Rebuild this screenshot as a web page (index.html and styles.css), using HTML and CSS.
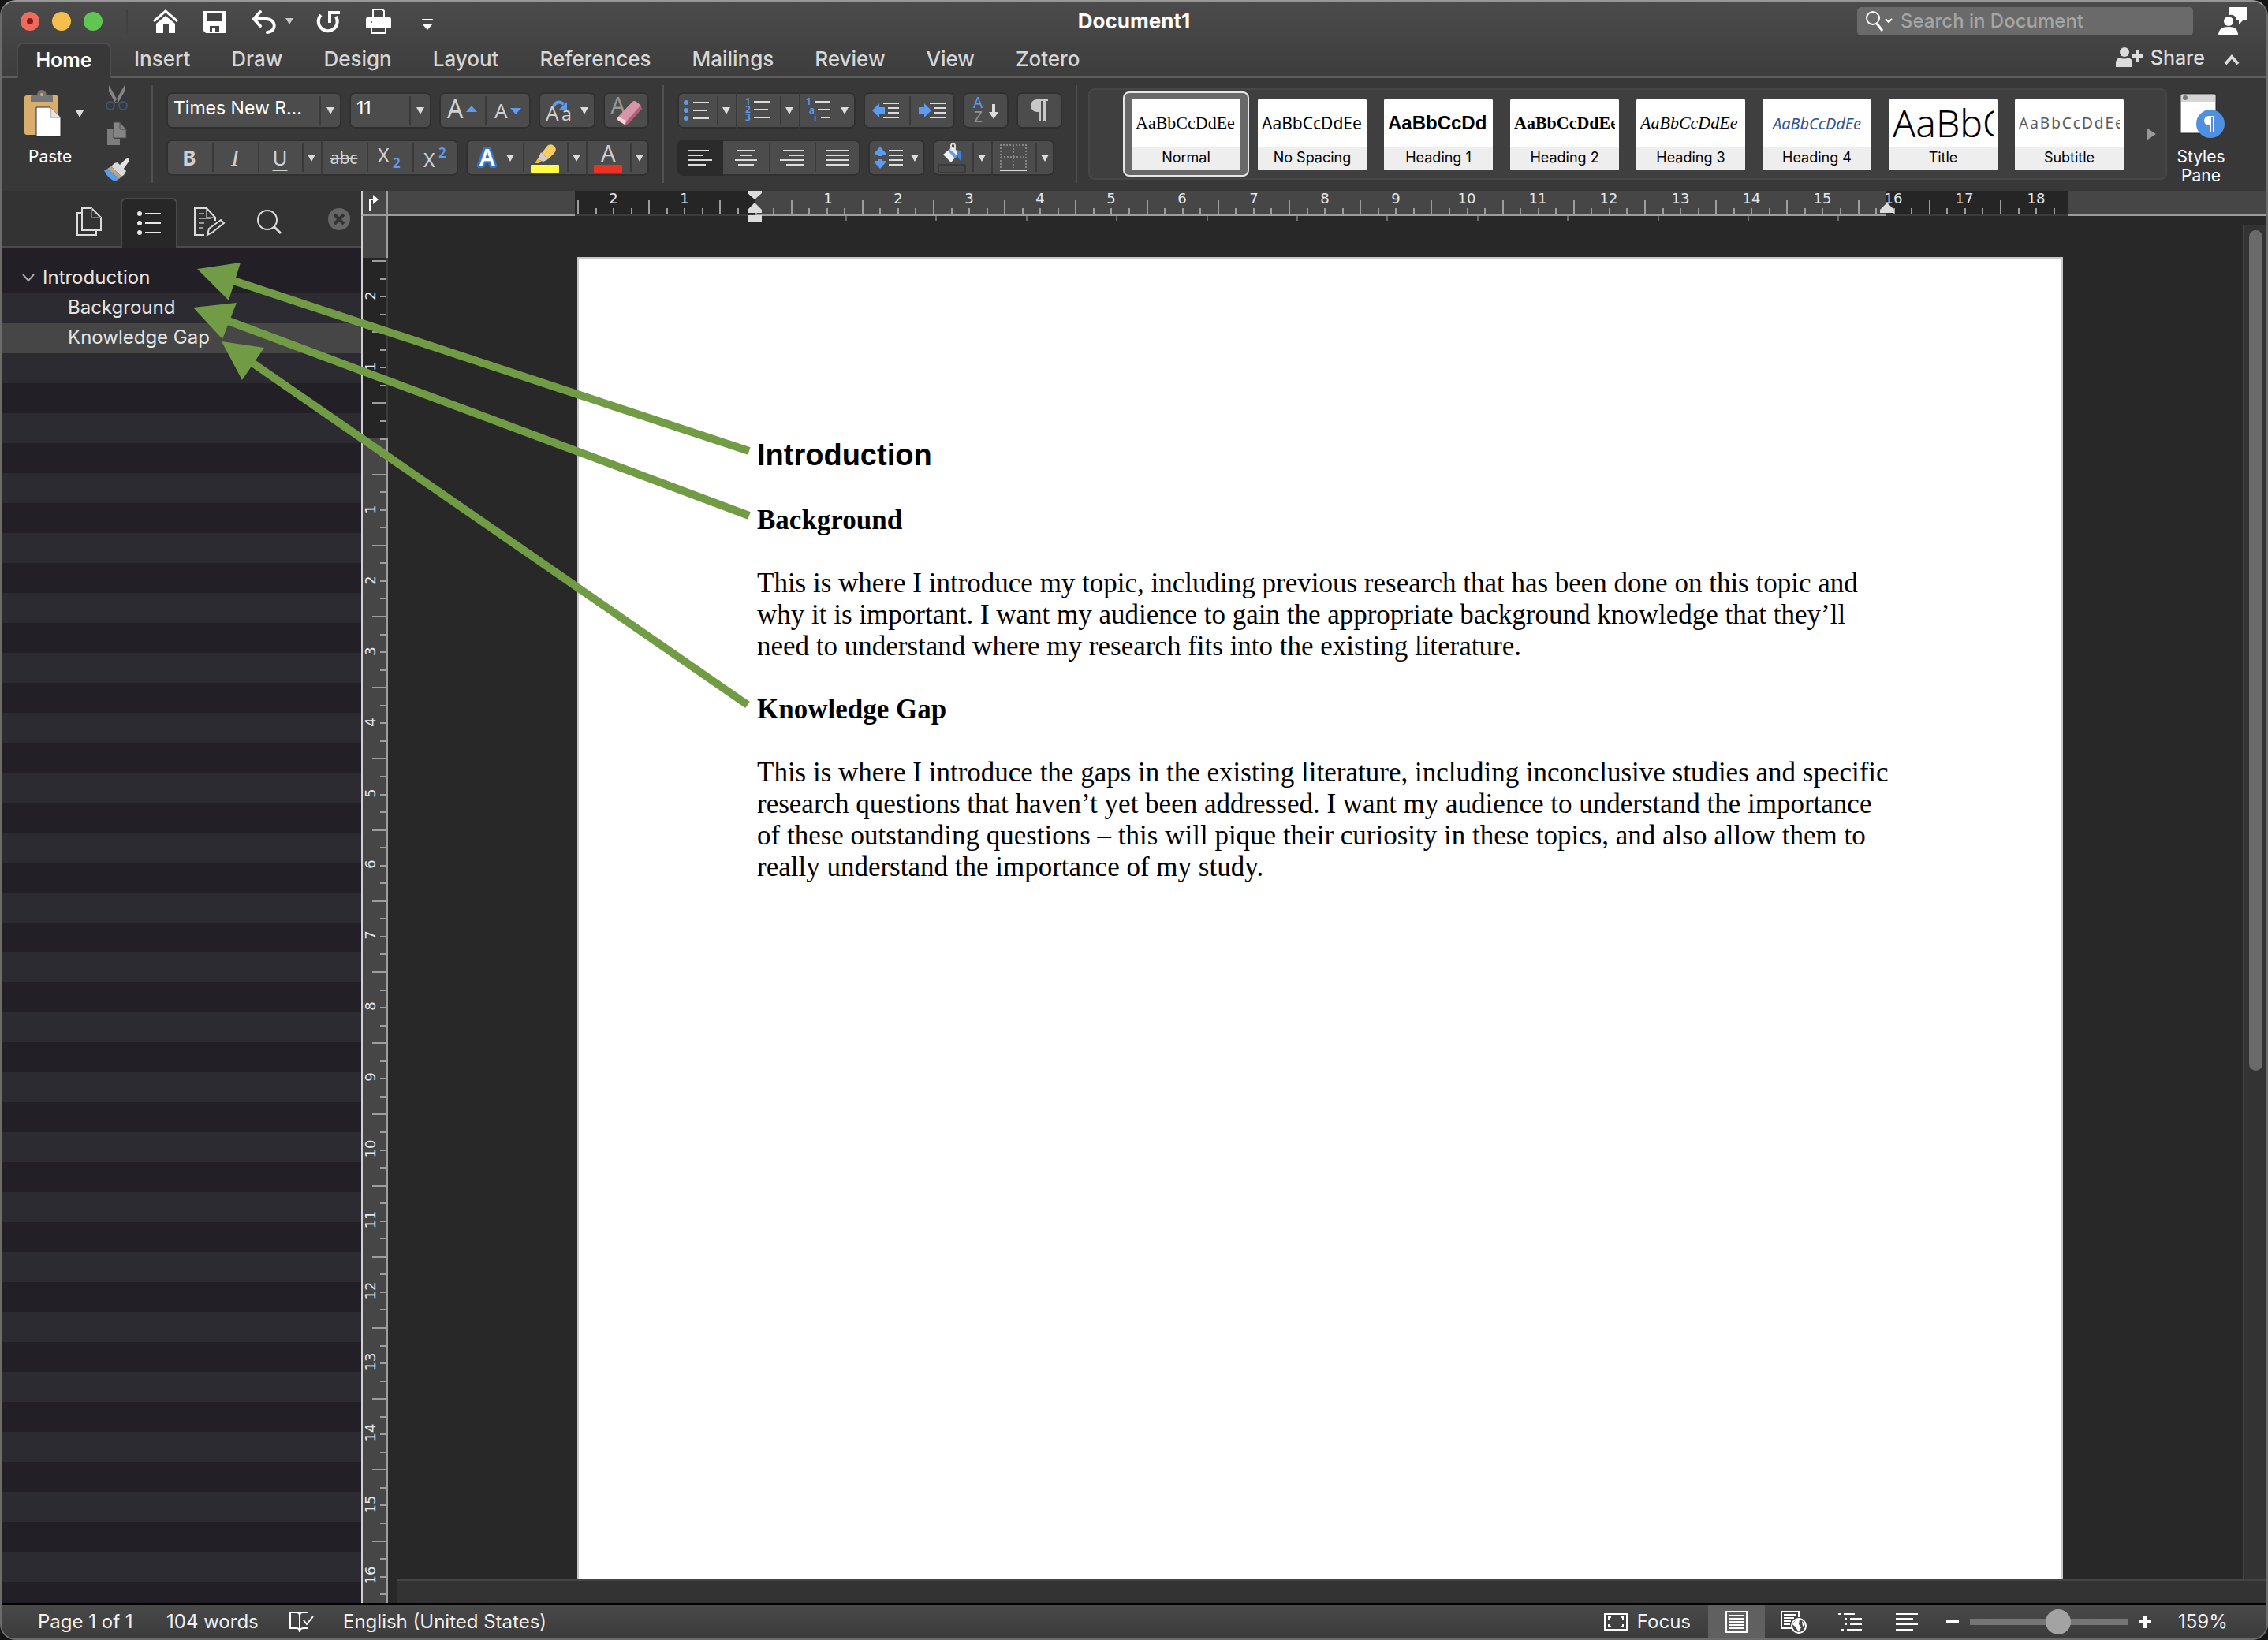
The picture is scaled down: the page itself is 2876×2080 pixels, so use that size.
FILE: index.html
```html
<!DOCTYPE html>
<html lang="en">
<head>
<meta charset="utf-8">
<title>Document1</title>
<link rel="stylesheet" href="styles.css">
</head>
<body>
<div class="window">
  <header class="chrome">
    <div class="titlebar">
      <div class="quick">
        <div class="lights">
          <button class="light red" aria-label="Close"><svg width="24" height="24"><circle cx="12" cy="12" r="4" fill="#8c1a12"/></svg></button>
          <button class="light yellow" aria-label="Minimize"></button>
          <button class="light green" aria-label="Zoom"></button>
        </div>
        <div class="quick-tools">
          <button aria-label="Home"><svg width="32" height="32" viewBox="0 0 32 32"><path d="M1 16 16 3 31 16" fill="none" stroke="#fff" stroke-width="3"/><path d="M4 19 16 9 28 19V31H20V20H13V31H4Z" fill="#fff"/></svg></button>
          <button aria-label="Save"><svg width="32" height="32" viewBox="0 0 32 32"><path d="M2 3H30V31H5L2 28Z" fill="#fff"/><path d="M6 5H26V16H6ZM10 22H22V29H17V25H13V29H10Z" fill="#454545"/></svg></button>
          <button class="undo" aria-label="Undo"><svg width="32" height="32" viewBox="0 0 32 32"><path d="M12 4 4 13 12 22M4 13H19C33 13 33 29 21 30" fill="none" stroke="#fff" stroke-width="4" stroke-linecap="round"/></svg><svg width="10" height="10" viewBox="0 0 10 10"><path d="M0 1H10L5 9Z" fill="#c8c8c8"/></svg></button>
          <button aria-label="Repeat"><svg width="32" height="32" viewBox="0 0 32 32"><path d="M5 8A12 12 0 1 0 24 10M16 18V5H29" fill="none" stroke="#fff" stroke-width="4"/></svg></button>
          <button aria-label="Print"><svg width="32" height="34" viewBox="0 0 32 34"><path d="M9 12V2H21L23 4V12" fill="none" stroke="#fff" stroke-width="2"/><path d="M4 11H28Q32 11 32 15V26H0V15Q0 11 4 11Z" fill="#fff"/><circle cx="7" cy="18" r="1" fill="#454545"/><rect x="7" y="25" width="18" height="7" fill="#454545" stroke="#fff" stroke-width="2"/></svg></button>
          <button aria-label="Customize toolbar"><svg width="32" height="32" viewBox="0 0 32 32"><path d="M9 13H23V15H9ZM9 19H23L16 27Z" fill="#fff"/></svg></button>
        </div>
      </div>
      <h1 class="title">Document1</h1>
      <div class="search-area">
        <label class="search"><svg width="38" height="32" viewBox="0 0 38 32"><circle cx="11" cy="12" r="8" fill="none" stroke="#fff" stroke-width="2"/><path d="M16 19 23 28" stroke="#fff" stroke-width="3"/><path d="M27 13 31 17 35 13" fill="none" stroke="#fff" stroke-width="2"/></svg><input type="text" placeholder="Search in Document" aria-label="Search in Document"></label>
        <button aria-label="Feedback"><svg width="36" height="36" viewBox="0 0 36 36"><path d="M14 0H36V16H32L26 22V16H23A7 7 0 0 0 14 10Z" fill="#fff"/><circle cx="13" cy="18" r="6" fill="#fff"/><path d="M0 36C0 28 5 25 13 25S25 28 25 36Z" fill="#fff"/></svg></button>
      </div>
    </div>
    <nav class="tabs">
      <button class="tab active">Home</button>
      <button class="tab">Insert</button>
      <button class="tab">Draw</button>
      <button class="tab">Design</button>
      <button class="tab">Layout</button>
      <button class="tab">References</button>
      <button class="tab">Mailings</button>
      <button class="tab">Review</button>
      <button class="tab">View</button>
      <button class="tab">Zotero</button>
      <button class="share"><svg width="36" height="26" viewBox="0 0 36 26"><ellipse cx="11" cy="6" rx="6" ry="6" fill="#dcdcdc"/><path d="M0 25V19Q1 14 5 13Q11 16 16 13Q21 15 21 19V25Z" fill="#dcdcdc"/><path d="M20 11H35M27 3V19" stroke="#dcdcdc" stroke-width="4"/></svg>Share</button>
      <button class="collapse" aria-label="Collapse ribbon"><svg width="20" height="14" viewBox="0 0 20 14"><path d="M2 12 10 3 18 12" fill="none" stroke="#dcdcdc" stroke-width="4"/></svg></button>
    </nav>
  </header>

  <section class="ribbon">
    <div class="clip">
      <button class="paste">
        <span class="paste-icons"><svg width="48" height="60" viewBox="0 0 48 60"><rect x="1" y="7" width="43" height="50" rx="3" fill="#d9ae6c"/><path d="M9 15V9Q9 6 13 6H17Q18 0 23 0T29 6H33Q37 6 37 9V15Z" fill="#757575"/><circle cx="23" cy="6" r="2" fill="#d9ae6c"/><path d="M16 22H34L47 35V59H16Z" fill="#fff" stroke="#2b2b2b"/><path d="M34 22V35H47Z" fill="#e4e4e4" stroke="#888"/></svg><svg width="10" height="10" viewBox="0 0 10 10"><path d="M0 1H10L5 10Z" fill="#dcdcdc"/></svg></span>
        <span>Paste</span>
      </button>
      <div class="clip-small">
        <button aria-label="Cut"><svg width="32" height="32" viewBox="0 0 32 32"><path d="M6 0 18 21 14 22 6 8ZM26 0 14 21 18 22 26 8Z" fill="#858585"/><circle cx="8" cy="26" r="5" fill="none" stroke="#3d5573" stroke-width="2"/><circle cx="24" cy="26" r="5" fill="none" stroke="#3d5573" stroke-width="2"/></svg></button>
        <button aria-label="Copy"><svg width="32" height="32" viewBox="0 0 32 32"><path d="M4 10H12V22H20V30H4Z" fill="#7d7d7d"/><path d="M12 1H20L28 10V21H12Z" fill="#858585" stroke="#4a4a4a"/><path d="M20 1V10H28" fill="none" stroke="#4a4a4a"/></svg></button>
        <button aria-label="Format painter"><svg width="32" height="32" viewBox="0 0 32 32"><path d="M19 10 27 2Q32 -1 32 4L24 15Z" fill="#e4e4e4"/><path d="M13 7 17 6 28 17 25 22 22 24 9 11Z" fill="#dadada"/><path d="M9 11 22 24 19 27 4 14Z" fill="#b9a48e"/><path d="M4 14 19 27 14 30Q4 26 0 16Z" fill="#5a9be8"/></svg></button>
      </div>
    </div>
    <div class="sep"></div>

    <div class="tools">
      <div class="row">
        <div class="group combo wide"><select aria-label="Font"><option>Times New R...</option></select><span class="drop"><svg width="10" height="10" viewBox="0 0 10 10"><path d="M0 1H10L5 10Z" fill="#dcdcdc"/></svg></span></div>
        <div class="group combo narrow"><select aria-label="Font size"><option>11</option></select><span class="drop"><svg width="10" height="10" viewBox="0 0 10 10"><path d="M0 1H10L5 10Z" fill="#dcdcdc"/></svg></span></div>
        <div class="group">
          <button class="b58" aria-label="Increase font size"><svg width="38" height="36" viewBox="0 0 38 36"><text x="0" y="28" font-size="32" fill="#d0d0d0">A</text><path d="M24 20 31 12 38 20Z" fill="#5b9cf2"/></svg></button>
          <button class="b58 div" aria-label="Decrease font size"><svg width="42" height="36" viewBox="0 0 42 36"><text x="4" y="28" font-size="26" fill="#d0d0d0">A</text><path d="M24 15H38L31 23Z" fill="#5b9cf2"/></svg></button>
        </div>
        <div class="group"><button class="b72" aria-label="Change case"><svg width="34" height="38" viewBox="0 0 34 38"><text x="0" y="32" font-size="26" fill="#d0d0d0">A</text><text x="20" y="32" font-size="23" fill="#d0d0d0">a</text><path d="M10 14Q14 5 23 11" fill="none" stroke="#5b9cf2" stroke-width="4"/><path d="M27 8V18H17Z" fill="#5b9cf2"/></svg><svg width="10" height="10" viewBox="0 0 10 10"><path d="M0 1H10L5 10Z" fill="#dcdcdc"/></svg></button></div>
        <div class="group"><button class="b58" aria-label="Clear formatting"><svg width="40" height="40" viewBox="0 0 40 40"><text x="0" y="25" font-size="30" fill="#989890">A</text><path d="M9 29 28 9Q30 7 33 9L38 13Q40 15 38 19L23 36Q20 39 16 36L10 33Q8 31 9 29Z" fill="#d795a9"/><path d="M10 28 20 33 18 38 10 33Q8 31 10 28Z" fill="#f4d3dc"/><path d="M38 14 40 18 23 37 19 38 21 33Z" fill="#b0607a"/></svg></button></div>
      </div>
      <div class="row">
        <div class="group">
          <button class="b58 glyph bold">B</button>
          <button class="b58 div glyph ital">I</button>
          <button class="b56 div glyph under">U</button>
          <button class="b24 div" aria-label="Underline style"><svg width="10" height="10" viewBox="0 0 10 10"><path d="M0 1H10L5 10Z" fill="#dcdcdc"/></svg></button>
          <button class="b58 full glyph strike">abc</button>
          <button class="b58 div" aria-label="Subscript"><svg width="30" height="36" viewBox="0 0 30 36"><text x="0" y="24" font-size="25" fill="#d0d0d0">X</text><text x="19" y="31" font-size="17" font-weight="600" fill="#5b9cf2">2</text></svg></button>
          <button class="b58 div" aria-label="Superscript"><svg width="30" height="36" viewBox="0 0 30 36"><text x="0" y="30" font-size="25" fill="#d0d0d0">X</text><text x="19" y="18" font-size="17" font-weight="600" fill="#5b9cf2">2</text></svg></button>
        </div>
        <div class="group">
          <button class="b72" aria-label="Text effects"><svg width="30" height="36" viewBox="0 0 30 36"><text x="6" y="28" font-size="29" font-weight="600" fill="#fff" stroke="#2f77c8" stroke-width="6" paint-order="stroke" stroke-linejoin="round">A</text></svg><svg width="10" height="10" viewBox="0 0 10 10"><path d="M0 1H10L5 10Z" fill="#dcdcdc"/></svg></button>
          <button class="b56 div" aria-label="Highlight"><svg width="36" height="38" viewBox="0 0 36 38"><path d="M21 4Q24 1 28 3L31 6Q33 9 30 13L22 21 14 13Z" fill="#f5cd63"/><path d="M13 12 22 21 16 24 9 21Z" fill="#d0d0d0"/><path d="M9 20 14 24 10 26H5Z" fill="#f0b83c"/><rect y="28" width="36" height="10" rx="1" fill="#fdfb45"/></svg></button>
          <button class="b24 div" aria-label="Highlight colour"><svg width="10" height="10" viewBox="0 0 10 10"><path d="M0 1H10L5 10Z" fill="#dcdcdc"/></svg></button>
          <button class="b56 full" aria-label="Font colour"><svg width="36" height="38" viewBox="0 0 36 38"><text x="9" y="24" font-size="29" fill="#d0d0d0">A</text><rect y="28" width="36" height="10" rx="1" fill="#ec3223"/></svg></button>
          <button class="b24 div" aria-label="Font colour list"><svg width="10" height="10" viewBox="0 0 10 10"><path d="M0 1H10L5 10Z" fill="#dcdcdc"/></svg></button>
        </div>
      </div>
    </div>
    <div class="sep"></div>

    <div class="tools">
      <div class="row">
        <div class="group">
          <button class="b50" aria-label="Bullets"><svg width="34" height="28" viewBox="0 0 34 28"><g fill="#5b9cf2"><circle cx="3" cy="4" r="3"/><circle cx="3" cy="14" r="3"/><circle cx="3" cy="24" r="3"/></g><path d="M12 4H32M12 14H30M12 24H32" stroke="#dcdcdc" stroke-width="2"/></svg></button>
          <button class="b24 div" aria-label="Bullet styles"><svg width="10" height="10" viewBox="0 0 10 10"><path d="M0 1H10L5 10Z" fill="#dcdcdc"/></svg></button>
          <button class="b56 full" aria-label="Numbering"><svg width="34" height="34" viewBox="0 0 34 34"><g fill="#5b9cf2" font-size="12" font-weight="600"><text x="1" y="10">1</text><text x="1" y="20">2</text><text x="1" y="30">3</text></g><path d="M12 6H32M12 16H30M12 26H32" stroke="#dcdcdc" stroke-width="2"/></svg></button>
          <button class="b24 div" aria-label="Number styles"><svg width="10" height="10" viewBox="0 0 10 10"><path d="M0 1H10L5 10Z" fill="#dcdcdc"/></svg></button>
          <button class="b72 full" aria-label="Multilevel list"><svg width="34" height="34" viewBox="0 0 34 34"><g fill="#5b9cf2" font-size="12" font-weight="600"><text x="0" y="10">1</text><text x="4" y="21">a</text><text x="10" y="31">i</text></g><path d="M11 6H31M15 16H31M19 26H31" stroke="#dcdcdc" stroke-width="2"/></svg><svg width="10" height="10" viewBox="0 0 10 10"><path d="M0 1H10L5 10Z" fill="#dcdcdc"/></svg></button>
        </div>
        <div class="group">
          <button class="b58" aria-label="Decrease indent"><svg width="36" height="26" viewBox="0 0 36 26"><path d="M0 13 9 4V9H16V17H9V22Z" fill="#5b9cf2"/><path d="M14 4H34M20 10H34M20 16H34M14 22H34" stroke="#dcdcdc" stroke-width="2"/></svg></button>
          <button class="b58 div" aria-label="Increase indent"><svg width="36" height="26" viewBox="0 0 36 26"><path d="M17 13 8 4V9H1V17H8V22Z" fill="#5b9cf2"/><path d="M15 4H35M21 10H35M21 16H35M15 22H35" stroke="#dcdcdc" stroke-width="2"/></svg></button>
        </div>
        <div class="group"><button class="b58" aria-label="Sort"><svg width="32" height="36" viewBox="0 0 32 36"><text x="0" y="15" font-size="19" fill="#5b9cf2">A</text><text x="1" y="33" font-size="19" fill="#909090">Z</text><path d="M26 10V22" stroke="#dcdcdc" stroke-width="4"/><path d="M20 20H32L26 29Z" fill="#dcdcdc"/></svg></button></div>
        <div class="group"><button class="b58" aria-label="Show formatting"><svg width="26" height="32" viewBox="0 0 26 32"><path d="M24 2H10A8 8 0 0 0 10 18H12V30H15V4H18V30H21V4H24Z" fill="#c8c8c8"/></svg></button></div>
      </div>
      <div class="row">
        <div class="group">
          <button class="b58 pressed" aria-label="Align left"><svg width="32" height="24" viewBox="0 0 32 24"><path d="M1 3H27M1 9H19M1 15H31M1 21H23" stroke="#dcdcdc" stroke-width="2"/></svg></button>
          <button class="b58" aria-label="Align centre"><svg width="30" height="24" viewBox="0 0 30 24"><path d="M3 3H27M7 9H23M1 15H29M5 21H25" stroke="#dcdcdc" stroke-width="2"/></svg></button>
          <button class="b58 div" aria-label="Align right"><svg width="30" height="24" viewBox="0 0 30 24"><path d="M4 3H30M12 9H30M0 15H30M8 21H30" stroke="#dcdcdc" stroke-width="2"/></svg></button>
          <button class="b58 div" aria-label="Justify"><svg width="30" height="24" viewBox="0 0 30 24"><path d="M1 3H29M1 9H29M1 15H29M1 21H29" stroke="#dcdcdc" stroke-width="2"/></svg></button>
        </div>
        <div class="group"><button class="b72" aria-label="Line spacing"><svg width="36" height="30" viewBox="0 0 36 30"><path d="M7 1 14 9V11H10V13H4V11H0V9ZM7 29 14 21V19H10V17H4V19H0V21Z" fill="#5b9cf2"/><path d="M18 6H36M18 12H36M18 18H36M18 24H36" stroke="#dcdcdc" stroke-width="2"/></svg><svg width="10" height="10" viewBox="0 0 10 10"><path d="M0 1H10L5 10Z" fill="#dcdcdc"/></svg></button></div>
        <div class="group">
          <button class="b50" aria-label="Shading"><svg width="36" height="40" viewBox="0 0 36 40"><path d="M6 16 18 6 26 14 16 26Z" fill="#f2f2f2"/><path d="M12 11 15 9 24 18 21 21Z" fill="#5b9cf2"/><path d="M16 12V4Q19 -1 21 4V12" fill="none" stroke="#ddd" stroke-width="2"/><path d="M23 10Q32 11 28 24L25 20Z" fill="#3f82dc"/><rect x="0" y="29" width="34" height="10" rx="1" fill="#494949" stroke="#3a3a3a" stroke-width="2"/></svg></button>
          <button class="b24 div" aria-label="Shading colours"><svg width="10" height="10" viewBox="0 0 10 10"><path d="M0 1H10L5 10Z" fill="#dcdcdc"/></svg></button>
          <button class="b56 full" aria-label="Borders"><svg width="34" height="36" viewBox="0 0 34 36"><path d="M1 31V2H33V31M1 17H33M17 2V31" fill="none" stroke="#858585" stroke-width="2" stroke-dasharray="2 2"/><path d="M0 34H34" stroke="#dcdcdc" stroke-width="2"/></svg></button>
          <button class="b24 div" aria-label="Border styles"><svg width="10" height="10" viewBox="0 0 10 10"><path d="M0 1H10L5 10Z" fill="#dcdcdc"/></svg></button>
        </div>
      </div>
    </div>
    <div class="sep last"></div>

    <div class="gallery">
      <button class="style selected"><span class="card"><span class="sample normal">AaBbCcDdEe</span><span class="name">Normal</span></span></button>
      <button class="style"><span class="card"><span class="sample nospace">AaBbCcDdEe</span><span class="name">No Spacing</span></span></button>
      <button class="style"><span class="card"><span class="sample h1">AaBbCcDd</span><span class="name">Heading 1</span></span></button>
      <button class="style"><span class="card"><span class="sample h2">AaBbCcDdEe</span><span class="name">Heading 2</span></span></button>
      <button class="style"><span class="card"><span class="sample h3">AaBbCcDdEe</span><span class="name">Heading 3</span></span></button>
      <button class="style"><span class="card"><span class="sample h4">AaBbCcDdEe</span><span class="name">Heading 4</span></span></button>
      <button class="style"><span class="card"><span class="sample big">AaBbC</span><span class="name">Title</span></span></button>
      <button class="style"><span class="card"><span class="sample sub">AaBbCcDdEe</span><span class="name">Subtitle</span></span></button>
      <button class="more" aria-label="More styles"><svg width="12" height="16" viewBox="0 0 12 16"><path d="M0 0 12 8 0 16Z" fill="#999"/></svg></button>
    </div>
    <button class="pane"><svg width="54" height="58" viewBox="0 0 54 58"><path d="M1 3Q1 1 3 1H44Q46 1 46 3V51H1Z" fill="#fff" stroke="#222"/><path d="M2 3Q2 2 3 2H44L45 3V11H2Z" fill="#d4d4d4"/><circle cx="7" cy="6" r="3" fill="#777"/><circle cx="39" cy="39" r="18" fill="#4f90e0"/><path d="M44 29H37A6 6 0 0 0 37 41H38V50H40V31H42V50H44Z" fill="#fff"/></svg><span>Styles<br>Pane</span></button>
  </section>

  <main class="work">
    <aside class="sidebar">
      <div class="side-tabs">
        <button aria-label="Thumbnails"><svg width="34" height="38" viewBox="0 0 34 38"><g fill="none" stroke="#dcdcdc" stroke-width="2"><path d="M8 2H20L32 14V30H8Z"/><path d="M20 2V14H32" stroke="#777"/><path d="M7 8H2V36H26V31"/></g></svg></button>
        <button class="active" aria-label="Document map"><svg width="32" height="32" viewBox="0 0 32 32"><g fill="#e8e8e8"><circle cx="4" cy="4" r="3"/><circle cx="4" cy="16" r="3"/><circle cx="4" cy="28" r="3"/></g><path d="M11 4H31M11 16H31M11 28H31" stroke="#e8e8e8" stroke-width="2"/></svg></button>
        <button aria-label="Reviewing"><svg width="40" height="38" viewBox="0 0 40 38"><g fill="none" stroke="#dcdcdc" stroke-width="2"><path d="M14 36H2V2H17L28 14V18"/><path d="M18 36 20 28 35 17 39 21 24 33Z"/></g><path d="M17 3V14H27M7 9H14M7 15H22M7 21H14M7 27H12" fill="none" stroke="#999" stroke-width="2"/></svg></button>
        <button aria-label="Find"><svg width="32" height="32" viewBox="0 0 32 32"><circle cx="14" cy="14" r="12" fill="none" stroke="#dcdcdc" stroke-width="2"/><path d="M22 22 31 31" stroke="#dcdcdc" stroke-width="3"/></svg></button>
        <button class="close" aria-label="Close pane"><svg width="28" height="28" viewBox="0 0 28 28"><circle cx="14" cy="14" r="14" fill="#666"/><path d="M8 8 20 20M20 8 8 20" stroke="#333" stroke-width="4"/></svg></button>
      </div>
      <ul class="outline">
        <li class="top"><svg width="16" height="12" viewBox="0 0 16 12"><path d="M1 2 8 10 15 2" fill="none" stroke="#aaa" stroke-width="2"/></svg>Introduction</li>
        <li class="child">Background</li>
        <li class="child current">Knowledge Gap</li>
      </ul>
    </aside>

    <div class="editor">
      <div class="corner"><svg width="30" height="30" viewBox="0 0 30 30"><path d="M9 26V11H14" fill="none" stroke="#fff" stroke-width="2"/><path d="M13 5 20 11 13 17Z" fill="#fff"/></svg></div>
      <div class="hruler">
        <svg width="1894" height="32" viewBox="0 0 1894 32">
          <path d="M2 0H231V32H2ZM1665 0H1895V32H1665Z" fill="#252525"/>
          <path d="M2 31H231M1665 31H1895" stroke="#3c3c3c" stroke-width="2"/>
          <g fill="none" stroke="#9d9d9d" shape-rendering="crispEdges">
            <path d="M5 26H1880" stroke-width="8" stroke-dasharray="2 20.55"/>
            <path d="M5 21H1880" stroke-width="18" stroke-dasharray="2 88.2"/>
            <path d="M345 35H1640" stroke="#6c6c6c" stroke-width="6" stroke-dasharray="2 112.4"/>
          </g>
          <g class="marks">
            <text x="51" y="16">2</text><text x="141" y="16">1</text><text x="323" y="16">1</text><text x="412" y="16">2</text><text x="502" y="16">3</text><text x="592" y="16">4</text><text x="682" y="16">5</text><text x="772" y="16">6</text><text x="863" y="16">7</text><text x="953" y="16">8</text><text x="1043" y="16">9</text><text x="1133" y="16">10</text><text x="1223" y="16">11</text><text x="1313" y="16">12</text><text x="1404" y="16">13</text><text x="1494" y="16">14</text><text x="1584" y="16">15</text><text x="1674" y="16">16</text><text x="1764" y="16">17</text><text x="1855" y="16">18</text>
          </g>
          <path d="M221 0H239V3L230 11 221 3ZM230 15 239 24V28H221V24ZM221 31H239V40H221ZM1666 15 1675 24V28H1657V24Z" fill="#dcdcdc"/>
        </svg>
      </div>
      <div class="vruler">
        <svg width="34" height="100%">
          <rect x="2" y="53" width="32" height="228" fill="#252525"/>
          <path d="M33 53V281" stroke="#3c3c3c" stroke-width="2"/>
          <g fill="none" stroke="#9d9d9d" shape-rendering="crispEdges">
            <path d="M28 56V1760" stroke-width="8" stroke-dasharray="2 20.55"/>
            <path d="M23 56V1760" stroke-width="18" stroke-dasharray="2 88.2"/>
          </g>
          <g class="marks">
            <text transform="translate(18 101) rotate(-90)">2</text><text transform="translate(18 191) rotate(-90)">1</text><text transform="translate(18 372) rotate(-90)">1</text><text transform="translate(18 462) rotate(-90)">2</text><text transform="translate(18 552) rotate(-90)">3</text><text transform="translate(18 642) rotate(-90)">4</text><text transform="translate(18 732) rotate(-90)">5</text><text transform="translate(18 822) rotate(-90)">6</text><text transform="translate(18 912) rotate(-90)">7</text><text transform="translate(18 1002) rotate(-90)">8</text><text transform="translate(18 1092) rotate(-90)">9</text><text transform="translate(18 1183) rotate(-90)">10</text><text transform="translate(18 1273) rotate(-90)">11</text><text transform="translate(18 1363) rotate(-90)">12</text><text transform="translate(18 1453) rotate(-90)">13</text><text transform="translate(18 1543) rotate(-90)">14</text><text transform="translate(18 1634) rotate(-90)">15</text><text transform="translate(18 1724) rotate(-90)">16</text>
          </g>
        </svg>
      </div>
      <div class="canvas">
        <div class="view">
          <article class="page">
            <h2>Introduction</h2>
            <h3>Background</h3>
            <p>This is where I introduce my topic, including previous research that has been done on this topic and<br>why it is important. I want my audience to gain the appropriate background knowledge that they’ll<br>need to understand where my research fits into the existing literature.</p>
            <h3>Knowledge Gap</h3>
            <p>This is where I introduce the gaps in the existing literature, including inconclusive studies and specific<br>research questions that haven’t yet been addressed. I want my audience to understand the importance<br>of these outstanding questions – this will pique their curiosity in these topics, and also allow them to<br>really understand the importance of my study.</p>
          </article>
        </div>
        <div class="vscroll"><div class="thumb"></div></div>
        <div class="hscroll"></div>
      </div>
    </div>
  </main>

  <footer class="status">
    <span class="pages">Page 1 of 1</span>
    <span class="words">104 words</span>
    <button class="proof" aria-label="Proofing"><svg width="34" height="30" viewBox="0 0 34 30"><path d="M15 26Q14 23 11 23H3V3H11Q15 3 15 7V28M15 7Q15 3 19 3H26M15 26Q16 23 20 23H26M20 13 24 18 32 8" fill="none" stroke="#fff" stroke-width="2"/></svg></button>
    <span class="lang">English (United States)</span>
    <button class="focus"><svg width="30" height="24" viewBox="0 0 30 24"><rect x="1" y="2" width="28" height="20" fill="none" stroke="#fff" stroke-width="2"/><path d="M6 9V6H9M21 6H24V9M6 15V18H9M21 18H24V15" fill="none" stroke="#fff" stroke-width="2"/></svg>Focus</button>
    <button class="mode on" aria-label="Print layout"><svg width="28" height="28" viewBox="0 0 28 28"><path d="M1 1H27V27H1ZM4 6H24M4 10H24M4 14H24M4 18H24M4 22H24" fill="none" stroke="#fff" stroke-width="2"/></svg></button>
    <button class="mode" aria-label="Web layout"><svg width="34" height="30" viewBox="0 0 34 30"><path d="M15 23H2V2H24V9M5 6H21M5 10H18M5 14H14M5 18H13" fill="none" stroke="#fff" stroke-width="2"/><circle cx="24" cy="20" r="9" fill="#444" stroke="#fff" stroke-width="2"/><path d="M20 13 25 12 24 18 27 22 24 28 20 22 16 18ZM28 14 32 18 29 21Z" fill="#fff"/></svg></button>
    <button class="mode" aria-label="Outline"><svg width="32" height="26" viewBox="0 0 32 26"><path d="M1 3H4M8 3H22M9 9H12M16 9H31M9 16H12M16 16H31M5 23H8M12 23H31" stroke="#fff" stroke-width="2"/></svg></button>
    <button class="mode" aria-label="Draft"><svg width="28" height="26" viewBox="0 0 28 26"><path d="M0 3H28M0 9H22M0 16H28M0 23H22" stroke="#fff" stroke-width="2"/></svg></button>
    <button class="step" aria-label="Zoom out"><svg width="16" height="16" viewBox="0 0 16 16"><path d="M0 8H16" stroke="#fff" stroke-width="4"/></svg></button>
    <input class="zoom" type="range" min="0" max="100" value="57" aria-label="Zoom">
    <button class="step" aria-label="Zoom in"><svg width="16" height="16" viewBox="0 0 16 16"><path d="M0 8H16M8 0V16" stroke="#fff" stroke-width="4"/></svg></button>
    <span class="percent">159%</span>
  </footer>

  <svg class="arrows" width="1000" height="920" viewBox="0 0 1000 920" aria-hidden="true">
    <g stroke="#729b45" stroke-width="10"><path d="M290 354 950 572"/><path d="M284 405 950 654"/><path d="M314 456 948 894"/></g>
    <path d="M250 341 305 333 290 381ZM245 390 300 384 282 430ZM281 433 335 441 307 482Z" fill="#729b45"/>
  </svg>
</div>
</body>
</html>
```
FILE: styles.css
```css
* { box-sizing: border-box; }
body { margin: 0; background: #151515; color: #fff; font-family: Inter, "Liberation Sans", sans-serif; font-size: 24px; }
button { margin: 0; padding: 0; border: 0; background: none; color: inherit; font: inherit; display: flex; align-items: center; justify-content: center; }
svg { display: block; flex: none; overflow: visible; }
svg text { font-family: "Noto Sans", "Open Sans", sans-serif; }

.window { position: relative; min-height: 100vh; display: flex; flex-direction: column; border: 2px solid #6b6b6b; border-top-color: #969696; border-radius: 20px; overflow: hidden; background: #383838; }

.chrome { height: 97px; display: flex; flex-direction: column; background: linear-gradient(#4b4b4b, #3d3d3d); border-bottom: 2px solid #5e5e5e; }
.titlebar { height: 49px; display: grid; grid-template-columns: 1fr auto 1fr; align-items: center; }
.quick { display: flex; align-items: center; }
.lights { display: flex; gap: 16px; padding: 3px 30px 3px 24px; border-right: 2px solid #404040; }
.light { width: 24px; height: 24px; border-radius: 50%; }
.red { background: #ed6a5e; }
.yellow { background: #f5bf4f; }
.green { background: #61c554; }
.quick-tools { display: flex; align-items: center; gap: 30px; padding-left: 32px; }
.undo { gap: 12px; }
.title { margin: 0; font-size: 26px; line-height: 30px; font-weight: 700; }
.search-area { display: flex; justify-content: flex-end; align-items: center; gap: 32px; padding-right: 25px; }
.search { width: 426px; height: 36px; display: flex; align-items: center; gap: 8px; padding-left: 9px; background: #6a6a6a; border-radius: 5px; }
.search input { flex: 1; min-width: 0; padding: 0; border: 0; background: none; color: #fff; font: inherit; outline: 0; }
.search input::placeholder { color: #a5a5a5; font-weight: 500; }

.tabs { height: 46px; display: flex; padding: 3px 0 0 19px; font-size: 26px; }
.tab { padding: 0 26px 2px; color: #d6d6d6; font-weight: 500; }
.tab.active { width: 120px; height: 45px; margin-right: 3px; padding: 0 0 4px; color: #fff; font-size: 25px; font-weight: 600; background: #383838; border: 2px solid #4c4c4c; border-bottom: 0; border-radius: 8px 8px 0 0; }
.share { margin-left: auto; gap: 8px; padding-bottom: 6px; color: #dcdcdc; font-size: 25px; font-weight: 500; }
.collapse { margin: 0 34px 0 24px; }

.ribbon { height: 143px; display: flex; align-items: flex-start; padding-top: 9px; background: #383838; }
.sep { width: 2px; height: 124px; margin: 0 17px; background: #505050; flex: none; }
.sep.last { margin-right: 14px; }
.clip { width: 173px; display: flex; padding-left: 28px; flex: none; }
.paste { flex-direction: column; align-items: flex-start; width: 102px; font-size: 21px; line-height: 24px; gap: 13px; padding-top: 6px; align-self: flex-start; }
.paste > span + span { padding-left: 6px; }
.paste-icons { display: flex; align-items: center; gap: 18px; }
.clip-small { display: flex; flex-direction: column; gap: 14px; }
.tools { display: flex; flex-direction: column; gap: 14px; padding-top: 9px; flex: none; }
.row { display: flex; gap: 10px; }
.group { height: 46px; display: flex; background: #4c4c4c; border-radius: 7px; box-shadow: inset 0 0 0 2px #303030; }
.group button { height: 46px; gap: 10px; }
.b24 { width: 24px; }
.b50 { width: 50px; }
.b56 { width: 56px; }
.b58 { width: 58px; }
.b72 { width: 72px; }
.div, .drop { background: linear-gradient(#393939, #393939) left center / 2px 36px no-repeat; }
.full { background: linear-gradient(#393939, #393939) left center / 2px 46px no-repeat; }
.pressed { background: #2b2b2b; border-radius: 7px 0 0 7px; }
.wide { width: 222px; }
.narrow { width: 104px; }
.combo select { flex: 1; min-width: 0; height: 42px; padding: 0 0 2px 9px; border: 0; background: none; color: #fff; font: inherit; font-size: 23px; appearance: none; }
.drop { width: 28px; display: flex; align-items: center; justify-content: center; }
.glyph { font-family: "Noto Sans", sans-serif; font-size: 26px; color: #d0d0d0; }
.bold { font-weight: 700; }
.ital { font-family: "Liberation Serif", serif; font-style: italic; font-size: 30px; }
.under { text-decoration: underline; text-underline-offset: 5px; }
.strike { font-size: 21px; text-decoration: line-through; }

.gallery { flex: 1; min-width: 0; height: 116px; display: flex; align-items: center; margin-top: 4px; padding-left: 42px; border: 2px solid #474747; border-radius: 8px; background: #3f3f3f; }
.style { width: 160px; height: 108px; border: 2px solid transparent; border-radius: 8px; flex: none; }
.style.selected { border-color: #e6e6e6; background: #686868; }
.card { width: 138px; height: 91px; display: flex; flex-direction: column; border-radius: 3px; overflow: hidden; background: #fff; color: #000; }
.sample { height: 61px; margin: 0 5px; padding-top: 2px; display: flex; align-items: center; overflow: hidden; white-space: nowrap; font-size: 22px; }
.name { height: 30px; font-size: 18px; line-height: 26px; background: #eee; border-top: 1px solid #e2e2e2; }
.normal, .h2, .h3 { font-family: "Liberation Serif", serif; }
.nospace, .h4, .sub, .big { font-family: "Noto Sans", sans-serif; }
.nospace { font-size: 21px; }
.h1 { font-family: "Liberation Sans", sans-serif; font-weight: 700; font-size: 24px; }
.h2 { font-weight: 700; }
.h3 { font-style: italic; }
.h4 { font-style: italic; color: #2f5496; font-size: 20px; justify-content: center; }
.big { font-size: 48px; font-weight: 300; padding: 0; }
.sub { color: #5a5a5a; font-size: 19px; letter-spacing: 2px; }
.more { margin-left: 18px; }
.pane { width: 86px; margin: 10px 40px 0 0; flex-direction: column; gap: 11px; font-size: 21px; line-height: 24px; }

.work { flex: 1; min-height: 0; display: flex; background: #282828; }
.sidebar { width: 456px; flex: none; display: flex; flex-direction: column; background: #222026; }
.side-tabs { height: 72px; display: flex; align-items: flex-end; padding-left: 73px; background: #333; border-bottom: 2px solid #4a4a4a; }
.side-tabs button { width: 76px; height: 61px; padding-bottom: 2px; }
.side-tabs .active { width: 72px; height: 63px; margin: 0 2px -2px; background: #272727; border: 2px solid #4a4a4a; border-bottom: 0; border-radius: 7px 7px 0 0; }
.side-tabs .close { width: 28px; padding-bottom: 8px; margin: 0 14px 0 auto; }
.outline { flex: 1; margin: 20px 0 0; padding: 0; list-style: none; background: repeating-linear-gradient(#222026 0 38px, #2c2b31 38px 76px); font-size: 24px; color: #e4e4e4; }
.outline li { height: 38px; display: flex; align-items: center; padding-bottom: 3px; }
.outline .top { padding-left: 26px; gap: 10px; }
.outline .child { padding-left: 84px; }
.outline .current { background: #464646; }

.editor { flex: 1; min-width: 0; display: grid; grid-template: 32px 1fr / 34px 1fr; }
.corner { background: #464646; border: 2px solid #9d9d9d; border-top: 0; border-left-color: #d0d0d0; }
.hruler { display: flex; justify-content: center; padding: 0 30px 0 12px; background: linear-gradient(#464646 30px, #9d9d9d 30px); }
.marks text { font-family: "DejaVu Sans", sans-serif; font-size: 18px; fill: #e6e6e6; text-anchor: middle; }
.vruler { background: linear-gradient(90deg, #d0d0d0 2px, #464646 2px 32px, #9d9d9d 32px); overflow: hidden; position: relative; }
.vruler svg { position: absolute; inset: 0; }
.canvas { display: grid; grid-template: 1fr 30px / 1fr 30px; padding-left: 12px; }
.view { display: flex; justify-content: center; padding-top: 52px; min-width: 0; }
.page { width: 1884px; padding: 229px 0 0 226px; background: #fff; border: 2px solid #c8c8c8; border-bottom: 0; color: #000; font-family: "Liberation Serif", serif; font-size: 35px; line-height: 40px; white-space: nowrap; }
.page h2, .page h3, .page p { margin: 0 0 40px; font-size: 35px; }
.page h2 { margin-bottom: 43px; font-family: "Liberation Sans", sans-serif; font-size: 38px; }
.vscroll { margin-top: 12px; padding: 6px 6px 0; background: #333; border-left: 2px solid #444; }
.thumb { height: 1066px; width: 17px; border-radius: 9px; background: #6a6a6a; }
.hscroll { grid-column: 1 / 3; background: #333; border-top: 2px solid #444; }

.status { height: 45px; display: flex; align-items: center; padding-left: 46px; border-top: 2px solid #000; background: linear-gradient(#494949, #3b3b3b); color: #f0f0f0; white-space: nowrap; }
.pages { width: 163px; }
.words { width: 154px; }
.proof { width: 34px; margin-right: 36px; }
.focus { margin-left: auto; gap: 12px; margin-right: 22px; }
.mode { width: 72px; height: 43px; }
.mode.on { background: #606060; }
.step { width: 16px; margin: 0 14px; }
.zoom { appearance: none; width: 200px; height: 32px; margin: 0; background: linear-gradient(#757575, #757575) center / 100% 8px no-repeat; }
.zoom::-webkit-slider-thumb { appearance: none; width: 32px; height: 32px; border-radius: 50%; background: #a3a3a3; }
.percent { width: 132px; padding-left: 20px; }

.arrows { position: absolute; top: -2px; left: -2px; pointer-events: none; }
```
